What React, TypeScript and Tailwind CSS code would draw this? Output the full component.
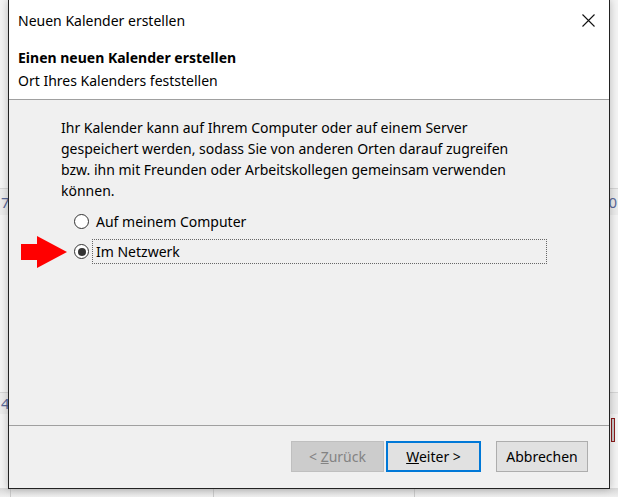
import React from 'react';

function Radio({ checked }: { checked?: boolean }) {
  return (
    <span className="w-[15px] h-[15px] rounded-full border border-[#333] bg-white flex items-center justify-center shrink-0">
      {checked && <span className="w-[8px] h-[8px] rounded-full bg-[#333]" />}
    </span>
  );
}

export default function App() {
  return (
    <div
      className="relative w-[618px] h-[497px] overflow-hidden bg-[#f4f4f4] text-black"
      style={{ fontFamily: '"Noto Sans", "Open Sans", sans-serif' }}
    >
      {/* calendar grid behind the dialog */}
      <div className="absolute left-0 right-0 top-[188px] h-[27px] bg-[#ececec] border-t border-[#d6d6d6]">
        <span className="absolute left-[1px] top-[2px] text-[15px] text-[#5a6a9a]">7</span>
        <span className="absolute right-[1px] top-[2px] text-[15px] text-[#5a6a9a]">0</span>
      </div>
      <div className="absolute left-0 right-0 top-[392px] h-[22px] bg-[#ececec] border-t border-[#d6d6d6]">
        <span className="absolute left-[1px] top-[-1px] text-[15px] text-[#5a6a9a]">4</span>
      </div>
      <div className="absolute right-[3px] top-[418px] w-[4px] h-[24px] border border-[#8b1a1a] bg-[#c9c9c9]" />
      <div className="absolute left-0 right-0 top-[488px] bottom-0 bg-gradient-to-b from-[#d8d8d8] to-[#efefef]" />
      <div className="absolute left-[10px] top-[430px] bottom-0 w-px bg-[#c8c8c8]" />
      <div className="absolute left-[213px] top-[480px] bottom-0 w-px bg-[#c8c8c8]" />
      <div className="absolute left-[414px] top-[480px] bottom-0 w-px bg-[#c8c8c8]" />

      {/* dialog */}
      <div className="relative ml-[8px] w-[602px] h-[489px] flex flex-col bg-[#f0f0f0] border-x border-b border-[#222] shadow-[0_0_8px_rgba(0,0,0,0.25)]">
        {/* title bar */}
        <div className="h-[40px] bg-white flex items-center justify-between pl-[9px] pr-[14px] shrink-0">
          <span className="text-[14px]">Neuen Kalender erstellen</span>
          <svg width="13" height="13" viewBox="0 0 13 13" className="shrink-0">
            <path d="M0.5 0.5 L12.5 12.5 M12.5 0.5 L0.5 12.5" stroke="#111" strokeWidth="1.1" fill="none" />
          </svg>
        </div>

        {/* header */}
        <div className="h-[60px] bg-white flex flex-col pl-[9px] pt-[7px] border-b border-[#a0a0a0] shrink-0">
          <span className="text-[14px] font-bold leading-[22px]">Einen neuen Kalender erstellen</span>
          <span className="text-[14px] leading-[24px]">Ort Ihres Kalenders feststellen</span>
        </div>

        {/* body */}
        <div className="flex-1 flex flex-col pl-[52px] pt-[17px]">
          <p className="text-[14px] leading-[21px] w-[470px]">
            Ihr Kalender kann auf Ihrem Computer oder auf einem Server gespeichert werden, sodass Sie von anderen Orten darauf zugreifen bzw. ihn mit Freunden oder Arbeitskollegen gemeinsam verwenden können.
          </p>
          <div className="flex items-center gap-[7px] pl-[13px] mt-[10px] h-[20px]">
            <Radio />
            <span className="text-[14px]">Auf meinem Computer</span>
          </div>
          <div className="relative flex items-center mt-[8px] h-[25px]">
            <svg width="46" height="32" viewBox="0 0 46 32" className="absolute left-[-40px] top-[-3px]">
              <polygon points="0,8 16,8 16,0 46,16 16,32 16,24 0,24" fill="#ff0000" />
            </svg>
            <span className="ml-[13px]">
              <Radio checked />
            </span>
            <span className="ml-[3px] flex-1 mr-[62px] h-[25px] flex items-center pl-[3px] border border-dotted border-[#666] text-[14px]">
              Im Netzwerk
            </span>
          </div>
        </div>

        {/* footer */}
        <div className="h-[63px] border-t border-[#a0a0a0] flex items-start justify-end pt-[15px] pr-[21px] shrink-0">
          <button className="w-[93px] h-[31px] bg-[#cccccc] border border-[#bfbfbf] text-[14px] text-[#838383]">
            &lt; <span className="underline">Z</span>urück
          </button>
          <button className="ml-[2px] w-[95px] h-[31px] bg-[#e1e1e1] border-2 border-[#0078d7] text-[14px]">
            <span className="underline">W</span>eiter &gt;
          </button>
          <button className="ml-[15px] w-[92px] h-[31px] bg-[#e1e1e1] border border-[#adadad] text-[14px]">
            Abbrechen
          </button>
        </div>
      </div>
    </div>
  );
}
